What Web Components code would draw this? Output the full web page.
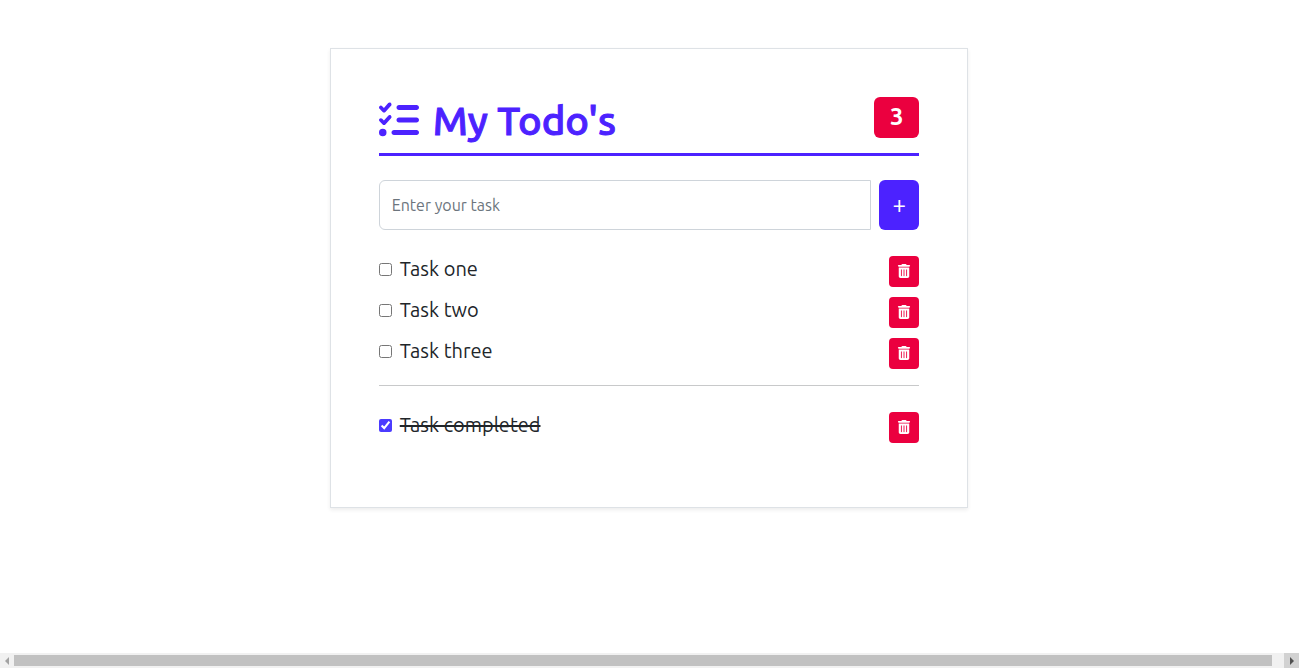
<!DOCTYPE html>
<html lang="en">
<head>
<meta charset="utf-8">
<title>My Todo's</title>
<style>
html, body { margin: 0; height: 100%; }
body {
  --primary: #4c22ff;
  --danger: #eb003f;
  display: flex;
  flex-direction: column;
  background: #fff;
  color: #212529;
  font: 16px/24px Ubuntu, "Noto Sans", sans-serif;
}
main { flex: 1; padding: 48px 0; }
</style>
</head>
<body>
<main>
  <todo-card>
    <todo-header slot="header" count="3">My Todo's</todo-header>
    <todo-form slot="form"></todo-form>
    <todo-item>Task one</todo-item>
    <todo-item>Task two</todo-item>
    <todo-item>Task three</todo-item>
    <todo-item slot="done" done>Task completed</todo-item>
  </todo-card>
</main>
<scroll-strip></scroll-strip>

<script>
class BaseElement extends HTMLElement {
  connectedCallback() {
    if (this.shadowRoot) return;
    this.attachShadow({ mode: "open" }).innerHTML =
      `<style>*, :host { box-sizing: border-box; }</style>` + this.render();
  }
}

customElements.define("todo-card", class extends BaseElement {
  render() {
    return `<style>
      :host { display: block; width: calc(50% - 11px); min-width: 320px; margin-left: calc(25% + 5px); padding: 48px;
        border: 1px solid #dee2e6; box-shadow: 0 2px 4px rgba(0,0,0,.075); }
      .list { display: flex; flex-direction: column; gap: 10px; }
      hr { margin: 16px 0 26px; border: 0; border-top: 1px solid #c8c9ca; }
      .done { padding-bottom: 16px; }
    </style>
    <slot name="header"></slot>
    <slot name="form"></slot>
    <div class="list"><slot></slot></div>
    <hr>
    <div class="list done"><slot name="done"></slot></div>`;
  }
});

customElements.define("todo-header", class extends BaseElement {
  render() {
    return `<style>
      :host { display: flex; justify-content: space-between; align-items: flex-start;
        padding-bottom: 8px; margin-bottom: 24px; border-bottom: 3px solid var(--primary); }
      h1 { display: flex; align-items: flex-start; gap: 14px; margin: 0; color: var(--primary);
        font: 500 40px/48px "Ubuntu Medium", Ubuntu, "Noto Sans", sans-serif; -webkit-text-stroke: 1px currentColor; }
      svg { width: 40px; height: 46px; fill: currentColor; }
      .badge { min-width: 45px; height: 41px; padding: 0 12px; border-radius: 6px; background: var(--danger); color: #fff;
        font-size: 24px; font-weight: 700; line-height: 39px; text-align: center; }
    </style>
    <h1><svg viewBox="0 0 512 512" aria-hidden="true"><path d="M152.1 38.2c9.9 8.9 10.7 24 1.8 33.9l-72 80c-4.4 4.9-10.6 7.8-17.2 7.9s-12.9-2.4-17.6-7L7 113C-2.3 103.6-2.3 88.4 7 79s24.6-9.4 33.9 0l22.1 22.1 55.1-61.2c8.9-9.9 24-10.7 33.9-1.8zm0 160c9.9 8.9 10.7 24 1.8 33.9l-72 80c-4.4 4.9-10.6 7.8-17.2 7.9s-12.9-2.4-17.6-7L7 273c-9.4-9.4-9.4-24.6 0-33.9s24.6-9.4 33.9 0l22.1 22.1 55.1-61.2c8.9-9.9 24-10.7 33.9-1.8zM224 96c0-17.7 14.3-32 32-32H480c17.7 0 32 14.3 32 32s-14.3 32-32 32H256c-17.7 0-32-14.3-32-32zm0 160c0-17.7 14.3-32 32-32H480c17.7 0 32 14.3 32 32s-14.3 32-32 32H256c-17.7 0-32-14.3-32-32zM160 416c0-17.7 14.3-32 32-32H480c17.7 0 32 14.3 32 32s-14.3 32-32 32H192c-17.7 0-32-14.3-32-32zM48 368a48 48 0 1 1 0 96 48 48 0 1 1 0-96z"/></svg><slot></slot></h1>
    <span class="badge">${this.getAttribute("count")}</span>`;
  }
});

customElements.define("todo-form", class extends BaseElement {
  render() {
    return `<style>
      :host { display: block; margin-bottom: 26px; }
      form { display: flex; gap: 8px; margin: 0; }
      input { flex: 1; min-width: 0; height: 50px; margin: 0; padding: 0 12px; border: 1px solid #ced4da;
        border-radius: 6px 0 0 6px; background: #fff; color: inherit; font: inherit; }
      input::placeholder { color: #6c757d; opacity: 1; }
      button { width: 40px; padding: 0; border: 0; border-radius: 6px; background: var(--primary); color: #fff;
        font: 24px/24px Ubuntu, "Noto Sans", sans-serif; }
    </style>
    <form><input type="text" placeholder="Enter your task" aria-label="Enter your task"><button type="button" aria-label="Add task">+</button></form>`;
  }
});

customElements.define("todo-item", class extends BaseElement {
  render() {
    const done = this.hasAttribute("done");
    return `<style>
      :host { display: flex; justify-content: space-between; align-items: flex-start; }
      label { display: flex; align-items: flex-start; gap: 8px; font-size: 20px; line-height: 25px; }
      .done span { text-decoration: line-through; }
      input { width: 13px; height: 13px; margin: 7px 0 0; accent-color: #4b3bff; }
      button { display: flex; align-items: flex-start; justify-content: center; width: 30px; height: 31px;
        padding: 8px 0 0; border: 0; border-radius: 4px; background: var(--danger); color: #fff; }
      svg { width: 14px; height: 14px; fill: currentColor; }
    </style>
    <label class="${done ? "done" : ""}"><input type="checkbox" ${done ? "checked" : ""}><span><slot></slot></span></label>
    <button type="button" aria-label="Delete task"><svg viewBox="0 0 448 512" aria-hidden="true"><path fill-rule="evenodd" d="M135.2 17.7C140.6 6.8 151.7 0 163.8 0H284.2c12.1 0 23.2 6.8 28.6 17.7L320 32h96c17.7 0 32 14.3 32 32s-14.3 32-32 32H32C14.3 96 0 81.7 0 64S14.3 32 32 32h96zM32 128H416V448c0 35.3-28.7 64-64 64H96c-35.3 0-64-28.7-64-64zM112 208V432a16 16 0 0 0 32 0V208a16 16 0 0 0-32 0zM208 208V432a16 16 0 0 0 32 0V208a16 16 0 0 0-32 0zM304 208V432a16 16 0 0 0 32 0V208a16 16 0 0 0-32 0z"/></svg></button>`;
  }
});

customElements.define("scroll-strip", class extends BaseElement {
  render() {
    return `<style>
      :host { display: flex; align-items: stretch; height: 15px; background: #f1f1f1; }
      span { display: flex; align-items: center; justify-content: center; width: 14px; }
      .right { width: 15px; background: #d2d2d2; }
      svg { width: 4px; height: 8px; }
      .track { flex: 1; padding: 2px 12px 2px 0; }
      .thumb { height: 11px; background: #c1c1c1; }
    </style>
    <span><svg viewBox="0 0 4 8" fill="#a3a3a3"><path d="M4 0v8L0 4z"/></svg></span>
    <div class="track"><div class="thumb"></div></div>
    <span class="right"><svg viewBox="0 0 4 8" fill="#505050"><path d="M0 0v8l4-4z"/></svg></span>`;
  }
});
</script>
</body>
</html>
